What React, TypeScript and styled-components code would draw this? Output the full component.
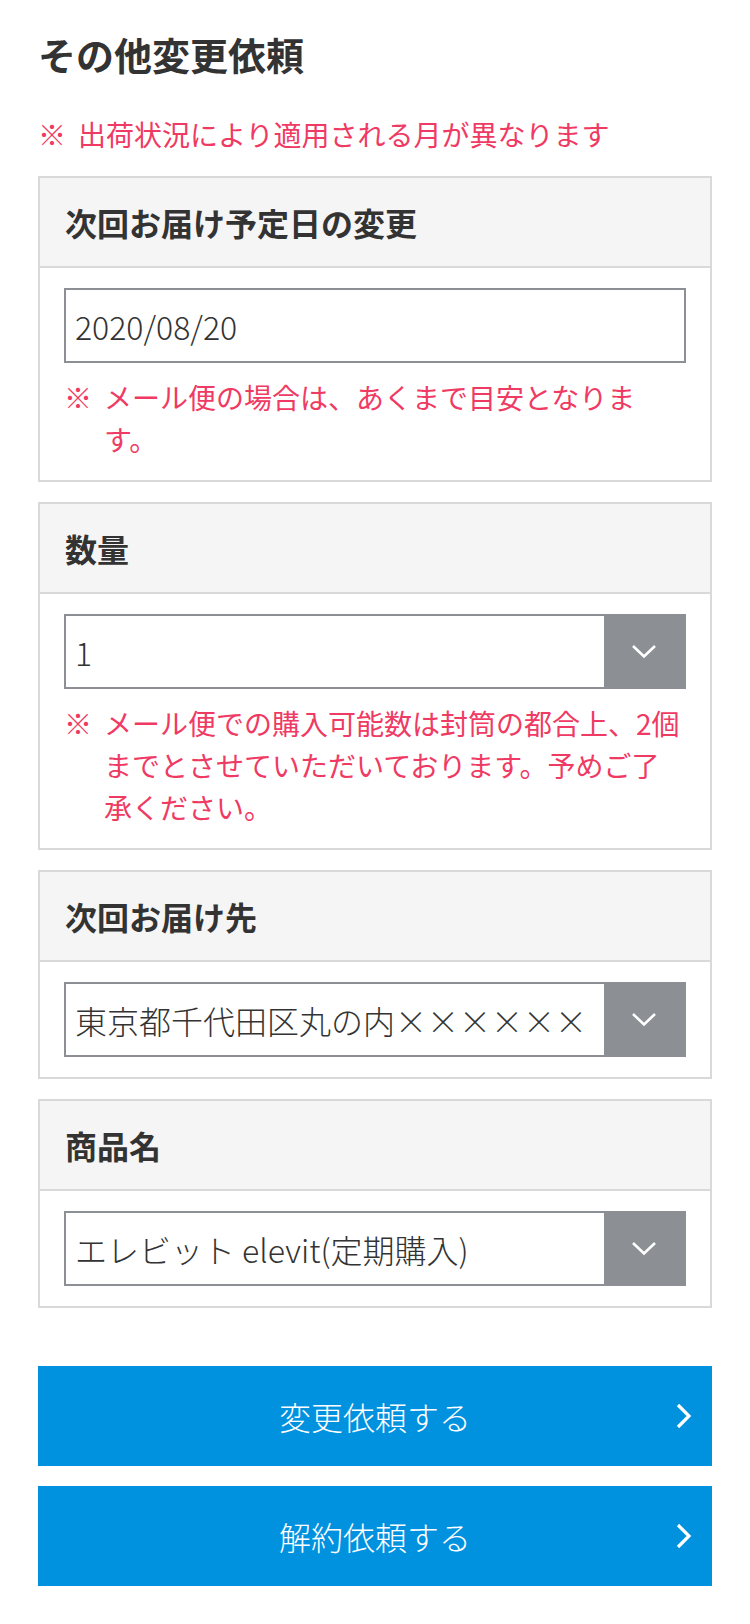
import styled, { createGlobalStyle } from "styled-components";

const GlobalStyle = createGlobalStyle`
  html, body {
    margin: 0;
    padding: 0;
    background: #fff;
  }
  body {
    font-family: "Noto Sans CJK JP", "Noto Sans", sans-serif;
    color: #333;
  }
`;

const Page = styled.div`
  padding: 26px 38px 38px;
`;

const Title = styled.h1`
  margin: 0;
  font-size: 38px;
  line-height: 56px;
  font-weight: 700;
  color: #333;
`;

const Note = styled.p<{ $top?: boolean }>`
  display: flex;
  margin: ${({ $top }) => ($top ? "31px 0 21px" : "13px 0 0")};
  font-size: 28px;
  line-height: 42px;
  color: #ef3a63;
`;

const Mark = styled.span`
  flex: 0 0 40px;
`;

const Card = styled.section`
  border: 2px solid #d9d9d9;
  & + & {
    margin-top: 20px;
  }
`;

const CardHeader = styled.h2`
  margin: 0;
  height: 88px;
  display: flex;
  align-items: center;
  padding: 0 25px;
  background: #f5f5f5;
  border-bottom: 2px solid #d9d9d9;
  font-size: 32px;
  font-weight: 700;
  color: #333;
`;

const CardBody = styled.div`
  padding: 20px 24px;
`;

const TextInput = styled.input`
  display: block;
  box-sizing: border-box;
  width: 100%;
  height: 75px;
  margin: 0;
  padding: 0 9px;
  border: 2px solid #8c9094;
  border-radius: 0;
  outline: none;
  font-family: inherit;
  font-size: 32px;
  font-weight: 300;
  color: #333;
  background: #fff;
`;

const SelectBox = styled.div`
  display: flex;
  box-sizing: border-box;
  height: 75px;
  border: 2px solid #8c9094;
  background: #fff;
`;

const SelectValue = styled.span`
  flex: 1;
  display: flex;
  align-items: center;
  padding: 0 9px;
  font-size: 32px;
  font-weight: 300;
  color: #333;
  white-space: nowrap;
  overflow: hidden;
`;

const SelectArrow = styled.span`
  flex: 0 0 80px;
  display: flex;
  align-items: center;
  justify-content: center;
  background: #8c9094;
`;

const Actions = styled.div`
  display: flex;
  flex-direction: column;
  gap: 20px;
  margin-top: 58px;
`;

const ActionButton = styled.button`
  position: relative;
  display: flex;
  align-items: center;
  justify-content: center;
  height: 100px;
  width: 100%;
  margin: 0;
  padding: 0;
  border: none;
  border-radius: 0;
  background: #0091df;
  color: #fff;
  font-family: inherit;
  font-size: 32px;
  font-weight: 300;
  cursor: pointer;

  svg {
    position: absolute;
    right: 19px;
    top: 50%;
    transform: translateY(-50%);
  }
`;

const ChevronDown = () => (
  <svg width="26" height="15" viewBox="0 0 26 15">
    <polyline points="2,2 13,12.5 24,2" fill="none" stroke="#fff" strokeWidth="2.6" />
  </svg>
);

const ChevronRight = () => (
  <svg width="18" height="26" viewBox="0 0 18 26">
    <polyline points="3,2 14,13 3,24" fill="none" stroke="#fff" strokeWidth="3.2" />
  </svg>
);

const Select = ({ value }: { value: string }) => (
  <SelectBox>
    <SelectValue>{value}</SelectValue>
    <SelectArrow>
      <ChevronDown />
    </SelectArrow>
  </SelectBox>
);

const CautionNote = ({ children, top }: { children: string; top?: boolean }) => (
  <Note $top={top}>
    <Mark>※</Mark>
    <span>{children}</span>
  </Note>
);

export default function App() {
  return (
    <>
      <GlobalStyle />
      <Page>
        <Title>その他変更依頼</Title>
        <CautionNote top>出荷状況により適用される月が異なります</CautionNote>

        <Card>
          <CardHeader>次回お届け予定日の変更</CardHeader>
          <CardBody>
            <TextInput defaultValue="2020/08/20" />
            <CautionNote>メール便の場合は、あくまで目安となります。</CautionNote>
          </CardBody>
        </Card>

        <Card>
          <CardHeader>数量</CardHeader>
          <CardBody>
            <Select value="1" />
            <CautionNote>
              メール便での購入可能数は封筒の都合上、2個までとさせていただいております。予めご了承ください。
            </CautionNote>
          </CardBody>
        </Card>

        <Card>
          <CardHeader>次回お届け先</CardHeader>
          <CardBody>
            <Select value="東京都千代田区丸の内××××××" />
          </CardBody>
        </Card>

        <Card>
          <CardHeader>商品名</CardHeader>
          <CardBody>
            <Select value="エレビット elevit(定期購入)" />
          </CardBody>
        </Card>

        <Actions>
          <ActionButton type="button">
            変更依頼する
            <ChevronRight />
          </ActionButton>
          <ActionButton type="button">
            解約依頼する
            <ChevronRight />
          </ActionButton>
        </Actions>
      </Page>
    </>
  );
}
